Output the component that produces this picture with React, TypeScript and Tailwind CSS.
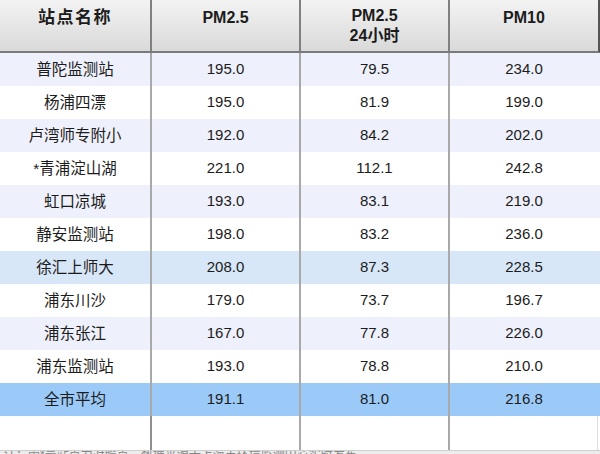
import React from 'react';

type Row = {
  name: string;
  pm25: string;
  pm25d: string;
  pm10: string;
  tone: 'light' | 'white' | 'hl' | 'avg';
};

const rows: Row[] = [
  { name: '普陀监测站', pm25: '195.0', pm25d: '79.5', pm10: '234.0', tone: 'light' },
  { name: '杨浦四漂', pm25: '195.0', pm25d: '81.9', pm10: '199.0', tone: 'white' },
  { name: '卢湾师专附小', pm25: '192.0', pm25d: '84.2', pm10: '202.0', tone: 'light' },
  { name: '*青浦淀山湖', pm25: '221.0', pm25d: '112.1', pm10: '242.8', tone: 'white' },
  { name: '虹口凉城', pm25: '193.0', pm25d: '83.1', pm10: '219.0', tone: 'light' },
  { name: '静安监测站', pm25: '198.0', pm25d: '83.2', pm10: '236.0', tone: 'white' },
  { name: '徐汇上师大', pm25: '208.0', pm25d: '87.3', pm10: '228.5', tone: 'hl' },
  { name: '浦东川沙', pm25: '179.0', pm25d: '73.7', pm10: '196.7', tone: 'white' },
  { name: '浦东张江', pm25: '167.0', pm25d: '77.8', pm10: '226.0', tone: 'light' },
  { name: '浦东监测站', pm25: '193.0', pm25d: '78.8', pm10: '210.0', tone: 'white' },
  { name: '全市平均', pm25: '191.1', pm25d: '81.0', pm10: '216.8', tone: 'avg' },
];

const toneClass: Record<Row['tone'], string> = {
  light: 'bg-[#eef0fb]',
  white: 'bg-white',
  hl: 'bg-[#d7e7f8]',
  avg: 'bg-[#9bcaf9]',
};

const font = { fontFamily: '"Liberation Sans", Arial, "Noto Sans CJK SC", sans-serif' };

export default function App() {
  return (
    <div className="w-[600px] h-[454px] overflow-hidden bg-white text-[#1c1c1c]" style={font}>
      <div className="grid grid-cols-[152px_149px_149px_148px] h-[53px] border-b-2 border-[#7a7a7a] bg-gradient-to-b from-[#f3f3f3] to-[#d9d9d9] border-r-2 border-r-[#555] w-[600px]">
        <div className="flex justify-center pt-[5px] text-[17px] font-bold tracking-[1.5px] border-r-2 border-[#808080]">
          站点名称
        </div>
        <div className="flex justify-center pt-[6px] text-[16px] font-bold border-r-2 border-[#808080]">
          PM2.5
        </div>
        <div className="flex flex-col items-center pt-[6px] text-[16px] font-bold leading-[20px] border-r-2 border-[#808080]">
          <span>PM2.5</span>
          <span>24小时</span>
        </div>
        <div className="flex justify-center pt-[6px] text-[16px] font-bold">PM10</div>
      </div>

      {rows.map((r) => (
        <div
          key={r.name}
          className={`grid grid-cols-[152px_149px_149px_148px] h-[33px] items-stretch text-[15px] ${toneClass[r.tone]}`}
        >
          <div className="flex items-center justify-center text-[15.5px] border-r-2 border-[#a9a9a9]">{r.name}</div>
          <div className="flex items-center justify-center border-r-2 border-[#a9a9a9]">{r.pm25}</div>
          <div className="flex items-center justify-center border-r-2 border-[#a9a9a9]">{r.pm25d}</div>
          <div className="flex items-center justify-center">{r.pm10}</div>
        </div>
      )) }

      <div className="grid grid-cols-[152px_149px_149px_148px] h-[34px] bg-white">
        <div className="border-r-2 border-[#8f8f8f]" />
        <div className="border-r-2 border-[#a9a9a9]" />
        <div className="border-r-2 border-[#a9a9a9]" />
        <div className="border-r border-[#dddddd]" />
      </div>

      <div className="h-[4px] overflow-hidden bg-[#ececec] border-t border-[#cfcfcf]">
        <div className="text-[12px] leading-[12px] text-[#888] whitespace-nowrap pl-1 -mt-[2px]">
          注：带*号站点为对照点，数据来源于上海市环境监测中心实时发布
        </div>
      </div>
    </div>
  );
}
